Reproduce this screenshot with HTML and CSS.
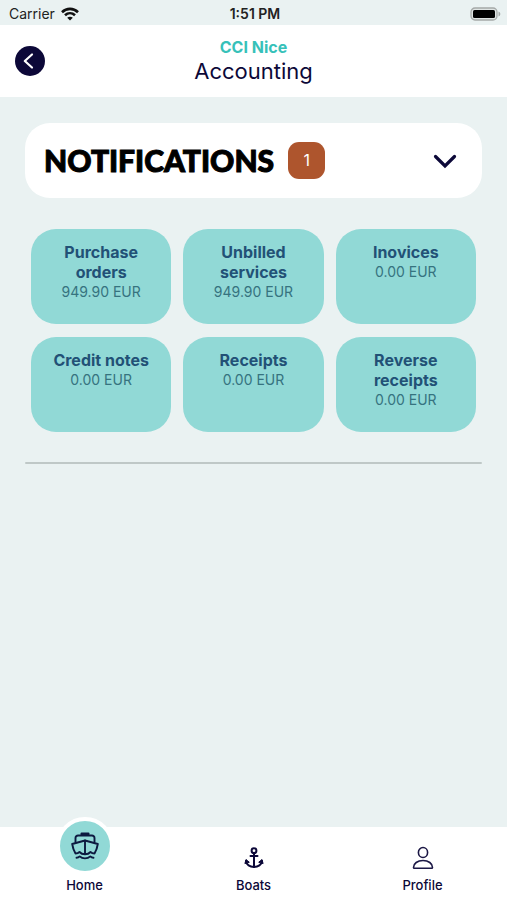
FILE: index.html
```html
<!DOCTYPE html>
<html lang="en">
<head>
  <meta charset="UTF-8">
  <meta name="viewport" content="width=device-width, initial-scale=1.0">
  <title>Accounting</title>
  <link rel="stylesheet" href="styles.css">
</head>
<body>
  <div class="status-bar">
    <div class="carrier">
      <span>Carrier</span>
      <svg width="18" height="14" viewBox="0 0 18 14" fill="none" stroke="#111" stroke-width="2.6">
        <path d="M1 5.2C5.6.8 12.4.8 17 5.2"/>
        <path d="M4 8.3c2.9-2.8 7.1-2.8 10 0"/>
        <path d="M9 13.6 6.2 10.8c1.6-1.5 4-1.5 5.6 0z" fill="#111" stroke="none"/>
      </svg>
    </div>
    <span class="time">1:51 PM</span>
    <div class="battery">
      <svg width="31" height="14" viewBox="0 0 31 14">
        <rect x="1" y="1" width="26" height="12" rx="4" fill="#dfe4e3" stroke="#a5a9a8" stroke-width="1.3"/>
        <rect x="3" y="3" width="22" height="8" rx="1.5" fill="#000"/>
        <path d="M28.5 4.5c2.4 1 2.4 4 0 5z" fill="#a5a9a8"/>
      </svg>
    </div>
  </div>

  <header class="header">
    <button class="back" type="button" aria-label="Back">
      <svg width="30" height="30" viewBox="0 0 30 30" fill="none" stroke="#fff" stroke-width="2.2" stroke-linecap="round" stroke-linejoin="round">
        <path d="M17 8.500 9.800 15l7.200 6.500"/>
      </svg>
    </button>
    <div class="titles">
      <p class="place">CCI Nice</p>
      <h1>Accounting</h1>
    </div>
  </header>

  <main class="content">
    <button class="notifications" type="button" aria-expanded="false">
      <span class="notifications-title">NOTIFICATIONS</span>
      <span class="badge">1</span>
      <svg class="chevron" width="24" height="16" viewBox="0 0 24 16" fill="none" stroke="#0c0838" stroke-width="3.2" stroke-linecap="round">
        <path d="M2.5 3.500 12 13 21.500 3.500"/>
      </svg>
    </button>

    <div class="cards">
      <a class="card" href="#"><strong>Purchase orders</strong><span>949.90 EUR</span></a>
      <a class="card" href="#"><strong>Unbilled services</strong><span>949.90 EUR</span></a>
      <a class="card" href="#"><strong>Inovices</strong><span>0.00 EUR</span></a>
      <a class="card" href="#"><strong>Credit notes</strong><span>0.00 EUR</span></a>
      <a class="card" href="#"><strong>Receipts</strong><span>0.00 EUR</span></a>
      <a class="card" href="#"><strong>Reverse receipts</strong><span>0.00 EUR</span></a>
    </div>
    <hr>
  </main>

  <nav class="tabs">
    <a class="tab active" href="#">
      <span class="tab-icon">
        <svg width="28" height="28" viewBox="0 0 28 28" fill="none" stroke="#0d1a40" stroke-width="1.9" stroke-linecap="round" stroke-linejoin="round">
          <path d="M10.5 3V1.500h7V3z"/>
          <path d="M4.500 10V6A2.500 2.500 0 0 1 7 3.500h14A2.500 2.500 0 0 1 23.500 6v4"/>
          <path d="M4.500 21.500C3 19 1.700 15.500 1.200 12L14 8.500 26.800 12c-.5 3.500-1.800 7-3.300 9.500-1.600-.1-3-.6-4-1.500-1.400 1.600-3.400 2.300-5.500 2.300S9.900 21.600 8.500 20c-1 .9-2.400 1.400-4 1.500z"/>
          <path d="M14 8.500v13.500"/>
          <path d="M5.500 25.700c1.300 0 2.400-.5 3.200-1.300 1.400 1.300 3.200 2 5.300 2s3.900-.7 5.300-2c.8.8 1.900 1.300 3.200 1.300"/>
        </svg>
      </span>
      <span>Home</span>
    </a>
    <a class="tab" href="#">
      <span class="tab-icon">
        <svg width="20" height="22" viewBox="0 0 20 22" fill="none" stroke="#0c0838" stroke-width="2" stroke-linecap="round" stroke-linejoin="round">
          <circle cx="10" cy="3.700" r="2.400"/>
          <path d="M10 6.200V20M6.500 9h7"/>
          <path d="M2 14c.5 3.700 3.800 6 8 6s7.500-2.300 8-6"/>
          <path d="M1 16.200 2 12.500l3 2.500zM19 16.200l-1-3.700-3 2.500z" fill="#0c0838" stroke-width="1"/>
        </svg>
      </span>
      <span>Boats</span>
    </a>
    <a class="tab" href="#">
      <span class="tab-icon">
        <svg width="22" height="24" viewBox="0 0 22 24" fill="none" stroke="#1b1745" stroke-width="1.600" stroke-linejoin="round">
          <ellipse cx="11" cy="6.500" rx="4.600" ry="5"/>
          <path d="M1.500 21.500c0-4 4-7 9.500-7s9.500 3 9.500 7c0 .5-.3.800-.8.800H2.300c-.5 0-.8-.3-.8-.8z"/>
        </svg>
      </span>
      <span>Profile</span>
    </a>
  </nav>
</body>
</html>
```
FILE: styles.css
```css
* {
  box-sizing: border-box;
}
body {
  margin: 0;
  min-height: 100vh;
  display: flex;
  flex-direction: column;
  background-color: #eaf2f2;
  color: #0c0838;
  font-family: Inter, "Liberation Sans", sans-serif;
}
button {
  border: none;
  padding: 0;
  font-family: inherit;
  cursor: pointer;
}
a {
  color: inherit;
  text-decoration: none;
}
svg {
  display: block;
}
.status-bar {
  display: grid;
  grid-template-columns: 1fr auto 1fr;
  align-items: center;
  height: 25px;
  padding: 2px 6px 0 9px;
  font-size: 14px;
  color: #222;
}
.carrier {
  display: flex;
  align-items: center;
  gap: 6px;
}
.time {
  font-weight: 600;
}
.battery {
  justify-self: end;
}
.header {
  display: grid;
  grid-template-columns: 30px 1fr 30px;
  align-items: center;
  height: 72px;
  padding: 0 15px;
  background-color: white;
}
.back {
  width: 30px;
  height: 30px;
  border-radius: 50%;
  background-color: #0c0838;
}
.titles {
  text-align: center;
}
.place {
  margin: 0;
  font-size: 16px;
  line-height: 20px;
  font-weight: 700;
  color: #36c1b9;
}
h1 {
  margin: 0;
  font-size: 22px;
  line-height: 28px;
  font-weight: 400;
}
.content {
  flex: 1;
  padding: 26px 25px;
}
.notifications {
  display: flex;
  align-items: center;
  gap: 14px;
  width: 100%;
  height: 75px;
  padding: 0 25px 0 19px;
  border-radius: 25px;
  background-color: white;
}
.notifications-title {
  font-family: Lato, sans-serif;
  font-size: 30px;
  line-height: 34px;
  padding-bottom: 2px;
  font-weight: 900;
  color: black;
  -webkit-text-stroke: 1px black;
}
.badge {
  width: 37px;
  border-radius: 11px;
  background-color: #ae552d;
  color: white;
  font-size: 16px;
  line-height: 37px;
}
.chevron {
  margin-left: auto;
}
.cards {
  display: grid;
  grid-template-columns: repeat(3, 1fr);
  gap: 13px 12px;
  padding: 31px 6px 30px;
}
.card {
  display: flex;
  flex-direction: column;
  height: 95px;
  padding: 13px 18px;
  border-radius: 25px;
  background-color: #91d9d6;
  text-align: center;
  font-size: 14px;
  line-height: 19px;
  color: #36737f;
}
.card strong {
  font-size: 16px;
  line-height: 20px;
  color: #225176;
}
hr {
  margin: 0;
  border: none;
  border-radius: 1px;
  height: 2px;
  background-color: #bfc8c7;
}
.tabs {
  display: grid;
  grid-template-columns: repeat(3, 1fr);
  grid-template-rows: 100%;
  height: 73px;
  background-color: white;
}
/* the active circle is taller than the bar and sticks out above it */
.tab {
  display: flex;
  flex-direction: column;
  align-items: center;
  justify-content: flex-end;
  padding-bottom: 6px;
  font-size: 13px;
  line-height: 18px;
  font-weight: 500;
}
.tab-icon {
  display: grid;
  place-items: center;
  height: 36px;
}
.active .tab-icon {
  flex-shrink: 0;
  width: 58px;
  height: 58px;
  margin-bottom: 1px;
  border: 4px solid white;
  border-radius: 50%;
  background-color: #91d9d6;
}
```
